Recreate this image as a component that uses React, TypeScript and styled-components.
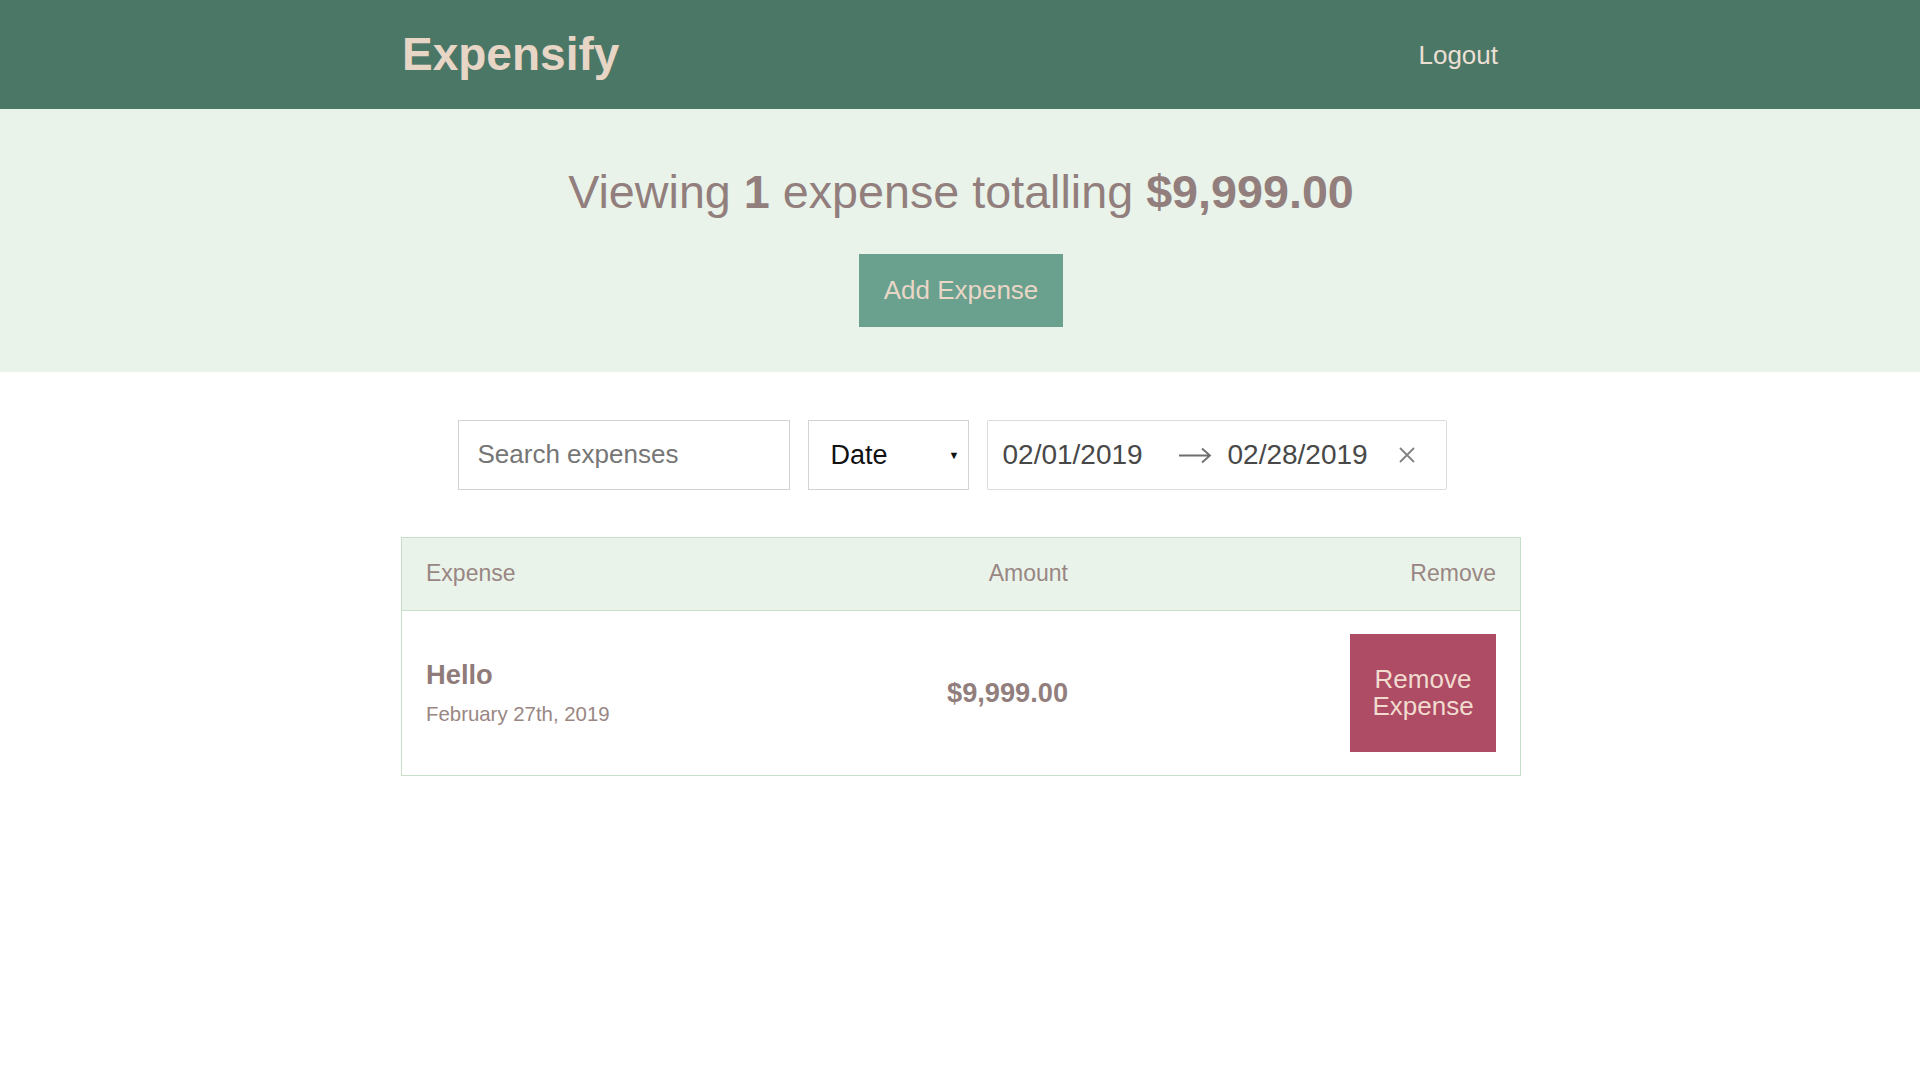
import React from "react";
import styled, { createGlobalStyle } from "styled-components";

const GlobalStyle = createGlobalStyle`
  *, *::before, *::after { box-sizing: border-box; }
  html, body { margin: 0; padding: 0; background: #ffffff; }
  body {
    font-family: "Liberation Sans", Arial, Helvetica, sans-serif;
    color: #927f7d;
  }
`;

const Header = styled.header`
  background: #4b7767;
  height: 109px;
`;

const Container = styled.div`
  width: 1120px;
  margin: 0 auto;
`;

const HeaderInner = styled(Container)`
  height: 100%;
  display: flex;
  align-items: center;
  justify-content: space-between;
`;

const Logo = styled.h1`
  margin: 0 0 0 2px;
  font-size: 46px;
  font-weight: 700;
  color: #e7d6c6;
  line-height: 1.15;
`;

const LinkButton = styled.button`
  background: none;
  border: none;
  font-family: inherit;
  font-size: 26px;
  color: #ecdfd3;
  padding: 2px 22px 0;
  cursor: pointer;
  line-height: 1.15;
`;

const Banner = styled.section`
  background: #e9f3ea;
  padding: 57px 0 45px;
`;

const BannerInner = styled(Container)`
  display: flex;
  flex-direction: column;
  align-items: center;
`;

const Title = styled.h2`
  margin: 0 0 34px 2px;
  font-size: 46.7px;
  font-weight: 400;
  line-height: 1.15;
  color: #927f7d;
  b { font-weight: 700; }
`;

const Button = styled.button<{ $tone: "green" | "red" }>`
  border: none;
  font-family: inherit;
  font-size: 26px;
  cursor: pointer;
  background: ${(p) => (p.$tone === "green" ? "#69a08e" : "#ad4c64")};
  color: ${(p) => (p.$tone === "green" ? "#e8d6c6" : "#f1dbcf")};
`;

const AddButton = styled(Button)`
  width: 204px;
  height: 73px;
  line-height: 1;
  padding: 0;
  margin-left: 2px;
`;

const RemoveButton = styled(Button)`
  width: 146px;
  height: 118px;
  line-height: 27px;
  padding: 0 18px;
`;

const Filters = styled(Container)`
  margin-top: 48px;
  display: flex;
  justify-content: center;
  gap: 18px;
  padding-right: 16px;
`;

const SearchInput = styled.input`
  width: 332px;
  height: 70px;
  border: 1px solid #d3d3d3;
  padding: 0 19px;
  font-family: inherit;
  font-size: 26px;
  color: #333;
  outline: none;
  &::placeholder { color: #767676; }
`;

const SelectWrap = styled.div`
  position: relative;
  width: 161px;
  height: 70px;
  &::after {
    content: "▼";
    position: absolute;
    right: 9px;
    top: 50%;
    transform: translateY(-50%);
    font-size: 11px;
    color: #111;
    pointer-events: none;
  }
`;

const Select = styled.select`
  appearance: none;
  -webkit-appearance: none;
  width: 100%;
  height: 100%;
  border: 1px solid #d3d3d3;
  border-radius: 0;
  background: #fff;
  padding: 0 22px;
  font-family: inherit;
  font-size: 27px;
  color: #111;
  outline: none;
`;

const RangeBox = styled.div`
  width: 460px;
  height: 70px;
  border: 1px solid #dcdcdc;
  border-radius: 2px;
  display: flex;
  align-items: center;
  background: #fff;
`;

const DateField = styled.div<{ $w: number; $pl: number }>`
  width: ${(p) => p.$w}px;
  padding-left: ${(p) => p.$pl}px;
  font-size: 28px;
  color: #484848;
  line-height: 1;
  white-space: nowrap;
`;

const ArrowIcon = styled.svg`
  width: 34px;
  height: 20px;
  flex: none;
`;

const ClearIcon = styled.svg`
  width: 18px;
  height: 18px;
  margin-left: 16px;
  flex: none;
`;

const List = styled.div`
  width: 1120px;
  margin: 47px 0 0 calc(50% - 559px);
  border: 1px solid #c5dfc8;
`;

const Row = styled.div`
  display: grid;
  grid-template-columns: 1fr auto 428px;
  align-items: center;
  padding: 0 24px;
`;

const ListHeader = styled(Row)`
  background: #e9f3ea;
  height: 73px;
  border-bottom: 1px solid #c5dfc8;
  font-size: 23px;
  color: #998683;
`;

const HeaderCell = styled.div<{ $align?: "left" | "right" }>`
  text-align: ${(p) => p.$align || "left"};
`;

const ListItem = styled(Row)`
  padding-top: 23px;
  padding-bottom: 23px;
`;

const ItemTitle = styled.h3`
  margin: 0 0 13px;
  font-size: 27.3px;
  font-weight: 700;
  line-height: 1.15;
  color: #8f7b79;
`;

const ItemSub = styled.span`
  display: block;
  font-size: 20.4px;
  line-height: 1.15;
  color: #998683;
`;

const Amount = styled.h3`
  margin: 0;
  font-size: 27.2px;
  font-weight: 700;
  color: #927f7d;
  text-align: right;
`;

const RemoveCell = styled.div`
  display: flex;
  justify-content: flex-end;
`;

export default function App() {
  return (
    <>
      <GlobalStyle />
      <Header>
        <HeaderInner>
          <Logo>Expensify</Logo>
          <LinkButton>Logout</LinkButton>
        </HeaderInner>
      </Header>
      <Banner>
        <BannerInner>
          <Title>
            Viewing <b>1</b> expense totalling <b>$9,999.00</b>
          </Title>
          <AddButton $tone="green">Add Expense</AddButton>
        </BannerInner>
      </Banner>
      <Filters>
        <SearchInput placeholder="Search expenses" />
        <SelectWrap>
          <Select defaultValue="date">
            <option value="date">Date</option>
            <option value="amount">Amount</option>
          </Select>
        </SelectWrap>
        <RangeBox>
          <DateField $w={190} $pl={15}>02/01/2019</DateField>
          <ArrowIcon viewBox="0 0 34 20">
            <path d="M1 10.5 H32 M24 3.5 L32 10.5 L24 17.5" fill="none" stroke="#6f6f6f" strokeWidth="1.8" />
          </ArrowIcon>
          <DateField $w={170} $pl={16}>02/28/2019</DateField>
          <ClearIcon viewBox="0 0 18 18">
            <path d="M2 2 L16 16 M16 2 L2 16" stroke="#828282" strokeWidth="1.8" />
          </ClearIcon>
        </RangeBox>
      </Filters>
      <List>
        <ListHeader>
          <HeaderCell>Expense</HeaderCell>
          <HeaderCell $align="right">Amount</HeaderCell>
          <HeaderCell $align="right">Remove</HeaderCell>
        </ListHeader>
        <ListItem>
          <div>
            <ItemTitle>Hello</ItemTitle>
            <ItemSub>February 27th, 2019</ItemSub>
          </div>
          <Amount>$9,999.00</Amount>
          <RemoveCell>
            <RemoveButton $tone="red">Remove Expense</RemoveButton>
          </RemoveCell>
        </ListItem>
      </List>
    </>
  );
}
